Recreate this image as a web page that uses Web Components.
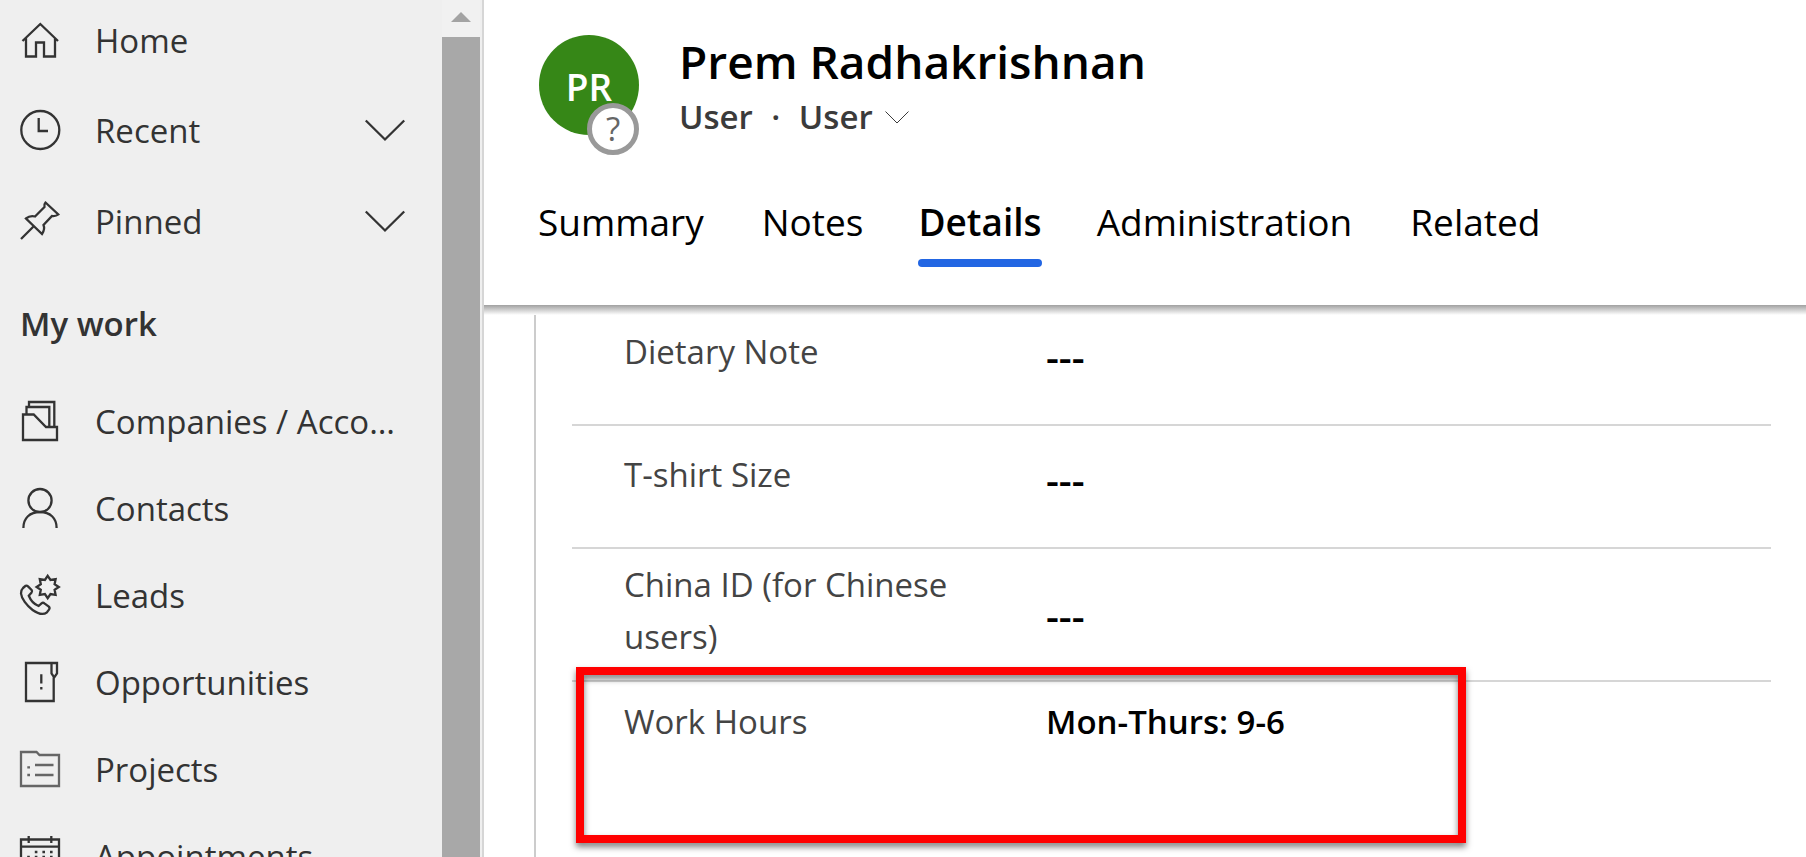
<!DOCTYPE html>
<html lang="en">
<head>
<meta charset="utf-8">
<meta name="viewport" content="width=device-width, initial-scale=1">
<title>Prem Radhakrishnan - User</title>
<style>
  body { margin: 0; font-family: "Open Sans", "Noto Sans", sans-serif; color: #333; background: #fff; }
</style>
</head>
<body>
<app-shell>
  <side-nav slot="nav">
    <nav-item icon="home">Home</nav-item>
    <nav-item icon="clock" expandable>Recent</nav-item>
    <nav-item icon="pin" expandable>Pinned</nav-item>
    <nav-group slot="groups" heading="My work">
      <nav-item icon="companies">Companies / Accounts</nav-item>
      <nav-item icon="contact">Contacts</nav-item>
      <nav-item icon="lead">Leads</nav-item>
      <nav-item icon="opportunity">Opportunities</nav-item>
      <nav-item icon="project">Projects</nav-item>
      <nav-item icon="calendar">Appointments</nav-item>
    </nav-group>
  </side-nav>
  <record-header slot="header" name="Prem Radhakrishnan" entity="User" form="User">
    <user-avatar slot="avatar" initials="PR"></user-avatar>
    <record-tab slot="tabs">Summary</record-tab>
    <record-tab slot="tabs">Notes</record-tab>
    <record-tab slot="tabs" selected>Details</record-tab>
    <record-tab slot="tabs">Administration</record-tab>
    <record-tab slot="tabs">Related</record-tab>
  </record-header>
  <form-section>
    <form-field label="Dietary Note"></form-field>
    <form-field label="T-shirt Size"></form-field>
    <form-field label="China ID (for Chinese users)" compact></form-field>
    <form-field label="Work Hours" value="Mon-Thurs: 9-6" compact highlight></form-field>
  </form-section>
</app-shell>

<script>
const ICONS = {
  home: '<path d="M2.5 21 20.3 4 38 21M6 18V36.5H16V22.5H24V36.5H35V18"/>',
  clock: '<circle cx="20.3" cy="20" r="19"/><path d="M18.7 8V21H28"/>',
  pin: '<path d="M25.5 1.5 38.3 13.5C36 15.5 33.5 15 32 15L23.5 24C24.8 27 24 30 22 33L6 17.5C9 15 12 14.8 15 15.5L24.5 6C24 4 24.5 2.5 25.5 1.5ZM14 25 1 38"/>',
  companies: '<path d="M3 13.5H13.7L26 26H37V39H3ZM6.5 13.5V6H29.3V26M9 6V1H34.3V26"/>',
  contact: '<circle cx="20" cy="12.6" r="11.6"/><path d="M3.4 40C3.4 30 10 24 20 24S36.6 30 36.6 40"/>',
  lead: '<path d="M27.7 .8 30.5 5 35.6 4.1 34.6 9.2 38.8 12 34.6 14.8 35.6 19.9 30.5 19 27.7 23.2 24.9 19 19.8 19.9 20.8 14.8 16.6 12 20.8 9.2 19.8 4.1 24.9 5ZM3 13 5.6 10.8Q6.8 10.2 8 11.4L11.6 15Q12.6 16.4 11.6 17.6L8.8 20.8C10.5 25 14.5 29.5 18.6 31L21.5 28.4Q23 27.2 24.4 28.4L28.8 31.6Q30.2 33 29 34.6L27 37.3C24 39.6 18.5 39.2 12.6 35 6.5 30.5 1.5 23.5 1 18.5Q1 14.8 3 13Z"/>',
  opportunity: '<path d="M31.5 1H6V39H33.7V15.5M31.5 1H37V11.5L34.2 15.5 31.5 11.5ZM21.3 12.3V21.5M21.3 25V27.5"/>',
  project: '<g stroke="#666"><path d="M1 3H16.5L19.5 6H39V37H1Z"/><path d="M15 16H33.5M15 26H33.5M7.3 18.3H10M7.3 26H10"/></g>',
  calendar: '<path d="M1 3.5H39V39H1ZM1 10.7H39M8.7 0V7M31.3 0V7"/><path stroke-dasharray="2.6 5" d="M14.8 16H33M7.2 21H33M7.2 26H33M7.2 31H26"/>',
  chevron: '<path d="M.8 10.5 20 29.5 39.2 10.5"/>'
};

const define = (tag, css, render) => customElements.define(tag, class extends HTMLElement {
  connectedCallback() {
    if (this.shadowRoot) return;
    const root = this.attachShadow({ mode: 'open' });
    root.innerHTML = '<style>:host,*{box-sizing:border-box}' + css + '</style>' + render(this);
  }
});

define('ui-icon', `
  :host { display: block; flex: none; width: 40px; height: 40px; }
  svg { display: block; width: 100%; height: 100%; fill: none; stroke: currentColor; stroke-width: 2.3; overflow: visible; }
`, el => `<svg viewBox="0 0 40 40" aria-hidden="true">${ICONS[el.getAttribute('name')]}</svg>`);

define('app-shell', `
  :host { display: grid; grid-template-columns: 484px minmax(0, 1fr); height: 100vh; overflow: hidden; }
  main { display: flex; flex-direction: column; min-width: 0; min-height: 0; }
`, () => `<slot name="nav"></slot><main><slot name="header"></slot><slot></slot></main>`);

define('side-nav', `
  :host { display: grid; grid-template-columns: minmax(0, 1fr) 38px; min-height: 0; overflow: hidden;
    background: #efefef; border-right: 2px solid #d6d6d6; padding-right: 2px; }
  nav { margin-top: -4px; min-width: 0; }
  .scroll { display: flex; flex-direction: column; background: #f1f1f1; }
  .scroll button { display: flex; justify-content: center; align-items: center; height: 37px; padding: 0 0 4px; border: 0; background: none; }
  .scroll svg { display: block; width: 20px; height: 10px; fill: #a3a3a3; }
  .thumb { flex: 1; background: #a8a8a8; }
`, () => `<nav aria-label="Site map"><slot></slot><slot name="groups"></slot></nav>
  <div class="scroll"><button type="button" aria-label="Scroll up"><svg viewBox="0 0 20 10"><path d="M10 0 20 10H0Z"/></svg></button><div class="thumb"></div></div>`);

define('nav-group', `
  :host { display: block; --row: 87px; }
  h2 { margin: 14px 0 9px; padding-left: 20px; font-size: 33px; line-height: 88px; font-weight: 600; }
`, el => `<h2>${el.getAttribute('heading')}</h2><slot></slot>`);

define('nav-item', `
  :host { display: block; }
  .row { display: flex; align-items: center; width: 100%; height: var(--row, 88px); padding: 0 37px 0 20px; border: 0;
    background: none; font: inherit; font-size: 33px; line-height: 48px; color: #333; text-decoration: none; text-align: left; }
  button.row { height: 91px; }
  .label { flex: 1; min-width: 0; margin-left: 35px; padding-top: 2px; overflow: hidden; white-space: nowrap; text-overflow: ellipsis; }
`, el => {
  const body = `<ui-icon name="${el.getAttribute('icon')}"></ui-icon><span class="label"><slot></slot></span>`;
  return el.hasAttribute('expandable')
    ? `<button class="row" type="button" aria-expanded="false">${body}<ui-icon name="chevron"></ui-icon></button>`
    : `<a class="row" href="#">${body}</a>`;
});

define('user-avatar', `
  :host { display: flex; align-items: center; justify-content: center; position: relative; flex: none; padding-top: 4px;
    width: 100px; height: 100px; border-radius: 50%; background: #368717; color: #fff; font-size: 37px; line-height: 52px; font-weight: 600; }
  .badge { position: absolute; right: 0; bottom: -20px; display: flex; align-items: center; justify-content: center;
    width: 52px; height: 52px; border: 5px solid #999; border-radius: 50%; background: #fff; color: #666; font-size: 33px; font-weight: 400; }
`, el => `<span>${el.getAttribute('initials')}</span><span class="badge">?</span>`);

define('record-header', `
  :host { display: flex; flex-direction: column; justify-content: space-between; flex: none; height: 305px; padding: 31px 51px 38px; position: relative; background: #fff; }
  :host::after { content: ""; position: absolute; left: 0; right: 0; top: 100%; height: 10px; background: linear-gradient(#a0a0a0, #fff); }
  .identity { display: flex; gap: 40px; padding-left: 4px; }
  ::slotted(user-avatar) { margin-top: 4px; }
  h1 { margin: 0; font-size: 46px; line-height: 60px; font-weight: 600; color: #000; }
  .sub { display: flex; align-items: center; margin-top: 4px; font-size: 33px; line-height: 44px; font-weight: 600; color: #3b3b3b; }
  .dot { width: 46px; text-align: center; }
  button { display: flex; align-items: center; gap: 12px; padding: 0; border: 0; background: none; font: inherit; color: inherit; }
  button svg { display: block; width: 24px; height: 13px; fill: none; stroke: currentColor; }
  .tabs { display: flex; gap: 52px; }
`, el => `<div class="identity"><slot name="avatar"></slot><div><h1>${el.getAttribute('name')}</h1>
  <div class="sub"><span>${el.getAttribute('entity')}</span><span class="dot">·</span>
  <button type="button" aria-haspopup="menu">${el.getAttribute('form')}<svg viewBox="0 0 24 13" aria-hidden="true"><path d="M.5 .5 12 12 23.5 .5"/></svg></button></div></div></div>
  <div class="tabs" role="tablist"><slot name="tabs"></slot></div>`);

define('record-tab', `
  :host { display: block; }
  button { position: relative; display: block; padding: 0 3px 19px; border: 0; background: none; font: inherit; font-size: 37px; line-height: 52px; color: #000; white-space: nowrap; }
  :host([selected]) button { padding-left: 0; padding-right: 0; font-weight: 600; }
  :host([selected]) button::after { content: ""; position: absolute; left: 0; right: 0; bottom: 0; height: 8px; border-radius: 4px; background: #2266e3; }
`, el => `<button type="button" role="tab" aria-selected="${el.hasAttribute('selected')}"><slot></slot></button>`);

define('form-section', `
  :host { display: block; flex: 1; min-height: 0; margin: 10px 35px 0 50px; padding-left: 36px; border-left: 2px solid #ccc; }
  .rows { margin-top: -12px; }
`, () => `<div class="rows"><slot></slot></div>`);

define('form-field', `
  :host { display: grid; grid-template-columns: 352px minmax(0, 1fr); align-items: center; gap: 70px; position: relative;
    padding: 23px 0 46px 52px; border-bottom: 2px solid #d6d6d6; font-size: 33px; line-height: 52px; }
  :host([compact]) { padding-top: 10px; padding-bottom: 17px; }
  :host([highlight]) { padding-top: 14px; border-bottom: 0; }
  label { color: #444; }
  input { display: block; width: 100%; height: 52px; padding: 0; border: 0; outline: 0; background: none; font: inherit; font-weight: 600; color: #000; }
  input.empty { padding-top: 10px; font-size: 40px; }
  .mark { position: absolute; left: 4px; right: 305px; top: -15px; height: 176px; border: 8px solid #f00;
    filter: drop-shadow(0 4px 3px rgba(0, 0, 0, .5)); pointer-events: none; }
`, el => {
  const value = el.getAttribute('value');
  return `<label for="field">${el.getAttribute('label')}</label>
  <input id="field" type="text" readonly value="${value || '---'}" class="${value ? '' : 'empty'}">
  ${el.hasAttribute('highlight') ? '<div class="mark"></div>' : ''}`;
});
</script>
</body>
</html>
